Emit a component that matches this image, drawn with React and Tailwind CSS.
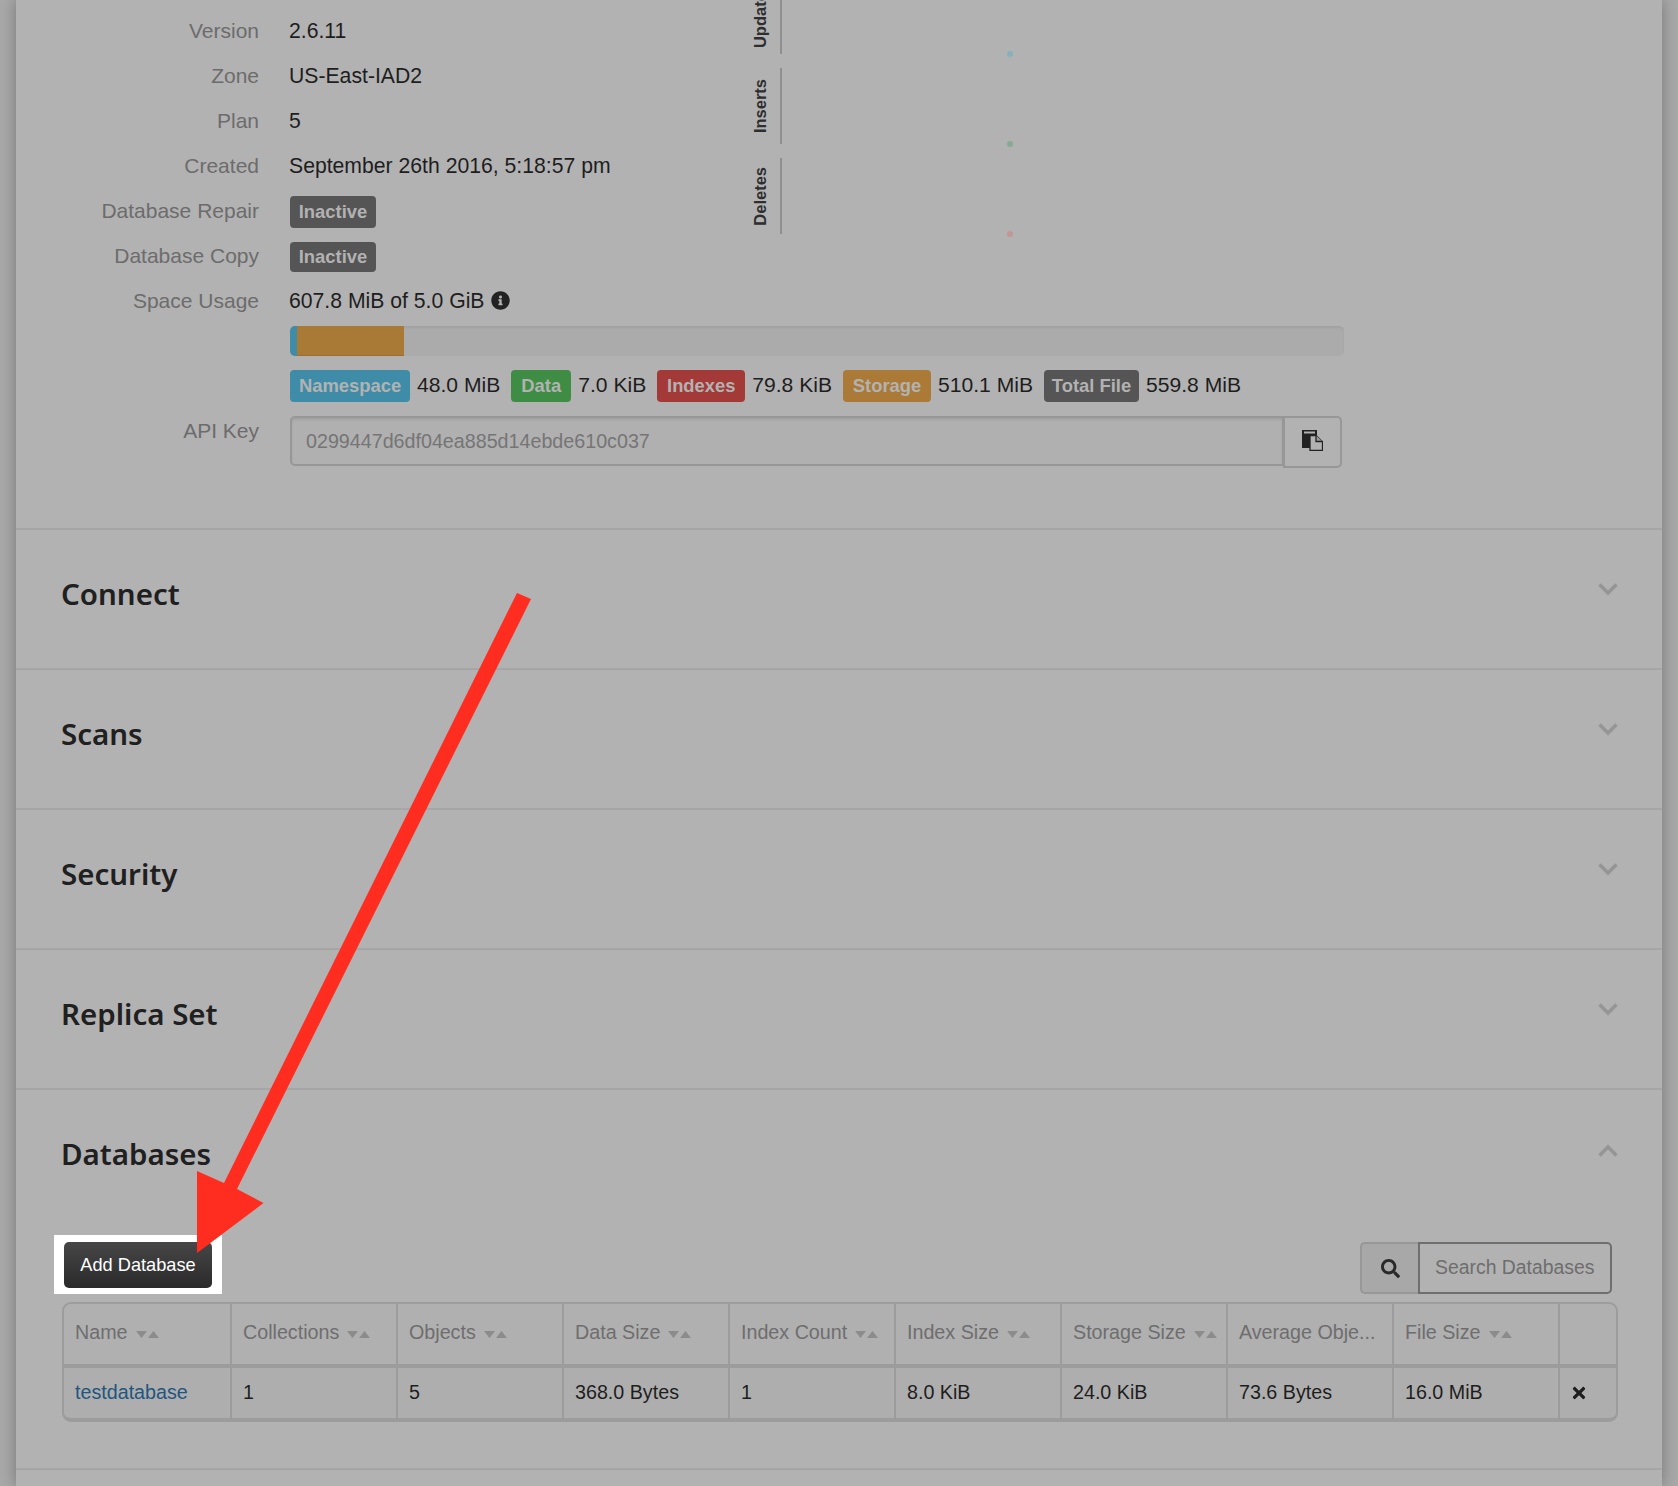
import React from 'react';
import { FaInfoCircle, FaSearch, FaTimes } from 'react-icons/fa';

const infoRows = [
  { label: 'Version', value: '2.6.11' },
  { label: 'Zone', value: 'US-East-IAD2' },
  { label: 'Plan', value: '5' },
  { label: 'Created', value: 'September 26th 2016, 5:18:57 pm' },
  { label: 'Database Repair', badge: 'Inactive' },
  { label: 'Database Copy', badge: 'Inactive', short: true },
  { label: 'Space Usage', value: '607.8 MiB of 5.0 GiB', info: true },
];

const charts = [
  { name: 'Updates', dot: 'bg-[#86b0bb]' },
  { name: 'Inserts', dot: 'bg-[#86ab90]' },
  { name: 'Deletes', dot: 'bg-[#c49595]' },
];

const legend = [
  { name: 'Namespace', size: '48.0 MiB', color: 'bg-[#3f8ca8] w-[120px]' },
  { name: 'Data', size: '7.0 KiB', color: 'bg-[#3f8c45] w-[60px]' },
  { name: 'Indexes', size: '79.8 KiB', color: 'bg-[#a33a37] w-[88px]' },
  { name: 'Storage', size: '510.1 MiB', color: 'bg-[#ac7a37] w-[88px]' },
  { name: 'Total File', size: '559.8 MiB', color: 'bg-[#555555] w-[95px]' },
];

const columns = ['Name', 'Collections', 'Objects', 'Data Size', 'Index Count', 'Index Size', 'Storage Size', 'Average Obje...', 'File Size', ''];
const row = ['1', '5', '368.0 Bytes', '1', '8.0 KiB', '24.0 KiB', '73.6 Bytes', '16.0 MiB'];

const Chevron = ({ up }) => (
  <svg width="20" height="14" viewBox="0 0 20 14" fill="none" stroke="#959595" strokeWidth="3.6" className={up ? 'rotate-180' : ''}>
    <path d="M1.5 2.5 L10 11 L18.5 2.5" />
  </svg>
);

const SortIcon = () => (
  <svg width="23" height="7" viewBox="0 0 23 7" fill="#8c8c8c" className="ml-[8px] shrink-0 mt-[3px]">
    <path d="M0 0 H11 L5.5 7 Z" />
    <path d="M12 7 H23 L17.5 0 Z" />
  </svg>
);

const CopyIcon = () => (
  <svg width="21" height="21" viewBox="0 0 21 21" className="mb-[3px]">
    <rect x="0" y="0" width="15" height="18" fill="#222222" />
    <rect x="2" y="1.5" width="11" height="2" fill="#b2b2b2" />
    <path d="M8 5.5 H14 L20.5 12 V20.5 H8 Z" fill="#b2b2b2" stroke="#222222" strokeWidth="1.3" />
    <path d="M14 5.5 V11.5 H20.5" fill="#9a9a9a" stroke="#222222" strokeWidth="1.3" />
  </svg>
);

const Section = ({ title, up, children }) => (
  <div className={`border-t-2 border-[#a6a6a6] ${children ? 'h-[380px]' : 'h-[140px]'}`}>
    <div className="flex justify-between pl-[45px] pr-[44px]">
      <h2 className="pt-[44px] text-[29.5px] leading-[40px] font-semibold text-[#202020] font-['Noto_Sans',sans-serif]">{title}</h2>
      <div className={up ? 'pt-[54px]' : 'pt-[52px]'}>
        <Chevron up={up} />
      </div>
    </div>
    {children}
  </div>
);

export default function App() {
  return (
    <div className="relative h-[1486px] overflow-hidden bg-[#a8a8a8] px-[16px] font-['Liberation_Sans',Arial,sans-serif] text-[20px] text-[#1e1e1e]">
      <div className="h-full bg-[#b2b2b2] shadow-[0_0_14px_rgba(0,0,0,0.3)]">
        {/* Summary */}
        <div className="h-[528px] pt-[8px] text-[21px]">
          <div className="flex h-[315px]">
            <div className="w-[724px]">
              {infoRows.map((r) => (
                <div key={r.label} className="flex h-[45px] items-center">
                  <div className="w-[243px] text-right text-[#6c6c6c]">{r.label}</div>
                  <div className="ml-[30px] flex items-center text-[21.2px]">
                    {r.value}
                    {r.info && <FaInfoCircle className="ml-[6px] text-[19px] text-[#222222]" />}
                    {r.badge && (
                      <span className={`ml-px mt-[3px] flex w-[86px] items-center justify-center rounded-[4px] bg-[#555555] text-[18.4px] font-bold text-[#b2b2b2] ${r.short ? 'h-[30px]' : 'h-[32px]'}`}>
                        {r.badge}
                      </span>
                    )}
                  </div>
                </div>
              ))}
            </div>

            {/* Sparkline charts */}
            <div className="-mt-[8px] h-[250px] w-[320px] overflow-hidden">
              <div className="-mt-[22px] flex flex-col gap-[14px]">
                {charts.map((c) => (
                  <div key={c.name} className="flex h-[76px] w-[310px] shrink-0">
                    <div className="flex w-[40px] items-center justify-center overflow-visible whitespace-nowrap">
                      <span className="rotate-180 text-[16.5px] font-bold text-[#2e2e2e] [writing-mode:vertical-rl]">{c.name}</span>
                    </div>
                    <div className="flex flex-1 items-end border-l-2 border-[#8f8f8f] pl-[225px]">
                      <span className={`-mb-[3px] block h-[6px] w-[6px] rounded-full ${c.dot}`} />
                    </div>
                  </div>
                ))}
              </div>
            </div>
          </div>

          <div className="pl-[274px]">
            <div className="mt-[3px] flex h-[30px] w-[1054px] overflow-hidden rounded-[5px] bg-[#ababab] shadow-[inset_0_2px_2px_rgba(0,0,0,0.05)]">
              <div className="w-[7px] bg-[#3f8ca8]" />
              <div className="w-[107px] border-b border-[#9a6e30] bg-[#a97a36]" />
            </div>

            <div className="mt-[14px] flex h-[32px] items-center">
              {legend.map((l) => (
                <div key={l.name} className="mr-[11px] flex items-center">
                  <span className={`flex h-[32px] items-center justify-center rounded-[4px] text-[18.4px] font-bold text-[#b2b2b2] ${l.color}`}>{l.name}</span>
                  <span className="ml-[7px] -mt-[2px] text-[21.1px]">{l.size}</span>
                </div>
              ))}
            </div>
          </div>

          <div className="mt-[14px] flex">
            <div className="-mt-px w-[243px] text-right text-[#6c6c6c]">API Key</div>
            <div className="ml-[31px] flex">
              <input
                readOnly
                defaultValue="0299447d6df04ea885d14ebde610c037"
                className="h-[50px] w-[994px] rounded-l-[5px] border-2 border-[#979797] bg-[#b0b0b0] px-[14px] text-[19.7px] text-[#757575] shadow-[inset_0_2px_2px_rgba(0,0,0,0.08)] outline-none"
              />
              <button className="-ml-[1px] flex h-[52px] w-[59px] items-center justify-center rounded-r-[5px] border-2 border-[#979797] bg-[#b2b2b2]">
                <CopyIcon />
              </button>
            </div>
          </div>
        </div>

        <Section title="Connect" />
        <Section title="Scans" />
        <Section title="Security" />
        <Section title="Replica Set" />

        <Section title="Databases" up>
          <div className="mt-[61px] flex items-end justify-between pl-[38px] pr-[50px]">
            <div className="bg-white px-[10px] pt-[7px] pb-[6px]">
              <button className="h-[46px] w-[148px] rounded-[5px] bg-gradient-to-b from-[#474747] to-[#2a2a2a] pt-[2px] text-[18.2px] text-white">Add Database</button>
            </div>
            <div className="flex h-[52px]">
              <div className="flex w-[58px] items-center justify-center rounded-l-[5px] border-2 border-r-0 border-[#979797] bg-[#a8a8a8] text-[#2a2a2a]">
                <FaSearch className="text-[19px]" />
              </div>
              <input
                placeholder="Search Databases"
                className="w-[194px] rounded-r-[5px] border-2 border-[#6f6f6f] bg-[#b2b2b2] pl-[15px] text-[19.4px] outline-none placeholder:text-[#6e6e6e]"
              />
            </div>
          </div>

          <div className="mt-[8px] pl-[46px] pr-[44px]">
            <div className="overflow-hidden rounded-[9px] border-x-2 border-t-2 border-b-4 border-[#9c9c9c] bg-[#aeaeae] text-[19.7px]">
              <table className="w-full table-fixed border-separate border-spacing-0">
                <colgroup>
                  <col className="w-[168px]" />
                  {columns.slice(1, -1).map((c) => (
                    <col key={c} className="w-[166px]" />
                  ))}
                  <col />
                </colgroup>
                <thead>
                  <tr>
                    {columns.map((c, i) => (
                      <th key={i} className={`h-[64px] border-b-4 border-[#9c9c9c] bg-[#b0b0b0] pb-[2px] pl-[11px] text-left font-normal text-[#6e6e6e] ${i < columns.length - 1 ? 'border-r-2' : ''}`}>
                        <div className="flex items-center whitespace-nowrap">
                          {c}
                          {c && c !== 'Average Obje...' && <SortIcon />}
                        </div>
                      </th>
                    ))}
                  </tr>
                </thead>
                <tbody>
                  <tr>
                    <td className="h-[50px] border-r-2 border-[#9c9c9c] pl-[11px]">
                      <a className="text-[#1f5580]" href="#">testdatabase</a>
                    </td>
                    {row.map((v, i) => (
                      <td key={i} className="border-r-2 border-[#9c9c9c] pl-[11px]">{v}</td>
                    ))}
                    <td className="pl-[10px]">
                      <FaTimes className="text-[18px] text-[#1e1e1e]" />
                    </td>
                  </tr>
                </tbody>
              </table>
            </div>
          </div>
        </Section>

        <div className="border-t-2 border-[#a6a6a6]" />
      </div>

      {/* Red annotation arrow */}
      <svg className="pointer-events-none absolute left-0 top-0" width="1678" height="1486" viewBox="0 0 1678 1486">
        <polygon points="517,593 531,599 237,1189 263.5,1203 197,1253 197,1171 224,1183" fill="#ff2d20" />
      </svg>
    </div>
  );
}
